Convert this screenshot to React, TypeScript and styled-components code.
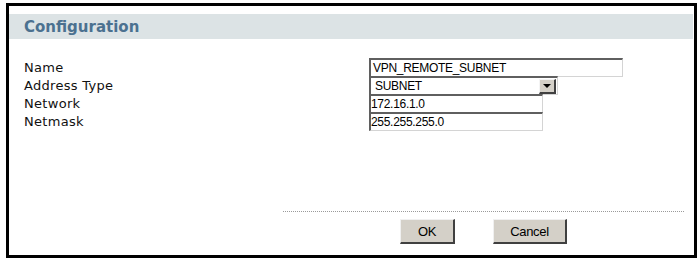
import React from "react";
import styled, { createGlobalStyle } from "styled-components";

const Global = createGlobalStyle`
  html, body { margin: 0; padding: 0; background: #fff; }
  body { font-family: "DejaVu Sans", Verdana, sans-serif; }
`;

const Panel = styled.div`
  box-sizing: border-box;
  margin: 3px 0 0 6px;
  width: 691px;
  height: 255px;
  border: 3px solid #000;
  padding-top: 8px;
  display: flex;
  flex-direction: column;
  background: #fff;
`;

const Header = styled.div`
  height: 25px;
  margin-right: 1px;
  background: #dce3e5;
  display: flex;
  align-items: center;
  padding-left: 15px;
  font-family: "DejaVu Sans", Verdana, sans-serif;
  font-weight: bold;
  font-size: 15px;
  color: #4b7190;
`;

const Form = styled.div`
  margin-top: 19px;
  padding-left: 15px;
  display: grid;
  grid-template-columns: 345px 1fr;
  grid-auto-rows: 18px;
`;

const Label = styled.div`
  display: flex;
  align-items: center;
  font-family: "DejaVu Sans", Verdana, sans-serif;
  font-size: 13px;
  letter-spacing: 0.3px;
  color: #111;
`;

const Field = styled.div<{ $w: number }>`
  box-sizing: border-box;
  width: ${(p) => p.$w}px;
  height: 19px;
  border-top: 2px solid #5f5f5f;
  border-left: 2px solid #5f5f5f;
  border-right: 1px solid #d4d4d4;
  border-bottom: 1px solid #d4d4d4;
  background: #fff;
  display: flex;
  align-items: center;
  padding-left: ${(p) => (p.$w > 200 ? 2 : 0)}px;
  font-family: "Liberation Sans", Arial, sans-serif;
  font-size: 12px;
  letter-spacing: -0.3px;
  color: #000;
`;

const SelectBox = styled(Field)`
  justify-content: space-between;
  padding-left: 4px;
  padding-right: 1px;
`;

const ArrowBtn = styled.div`
  box-sizing: border-box;
  width: 17px;
  height: 15px;
  background: #d4d0c8;
  border-top: 1px solid #f4f4f4;
  border-left: 1px solid #f4f4f4;
  border-right: 2px solid #404040;
  border-bottom: 2px solid #404040;
  display: flex;
  align-items: center;
  justify-content: center;
`;

const Footer = styled.div`
  margin-top: auto;
  margin-left: 274px;
  margin-right: 10px;
  border-top: 1px dotted #9a9a9a;
  padding-top: 7px;
  padding-bottom: 11px;
  display: flex;
  justify-content: center;
  gap: 38px;
`;

const Button = styled.button<{ $w: number }>`
  box-sizing: border-box;
  width: ${(p) => p.$w}px;
  height: 25px;
  margin: 0;
  padding: 0;
  background: #d4d0c8;
  border-top: 1px solid #f0f0f0;
  border-left: 1px solid #f0f0f0;
  border-right: 2px solid #404040;
  border-bottom: 2px solid #404040;
  font-family: "Liberation Sans", Arial, sans-serif;
  font-size: 13px;
  letter-spacing: -0.3px;
  color: #000;
`;

export default function App() {
  return (
    <>
      <Global />
      <Panel>
        <Header>Configuration</Header>
        <Form>
          <Label>Name</Label>
          <Field $w={254}>VPN_REMOTE_SUBNET</Field>
          <Label>Address Type</Label>
          <SelectBox $w={189}>
            <span>SUBNET</span>
            <ArrowBtn>
              <svg width="8" height="4" viewBox="0 0 8 4">
                <polygon points="0,0 8,0 4,4" fill="#000" />
              </svg>
            </ArrowBtn>
          </SelectBox>
          <Label>Network</Label>
          <Field $w={174}>172.16.1.0</Field>
          <Label>Netmask</Label>
          <Field $w={174}>255.255.255.0</Field>
        </Form>
        <Footer>
          <Button $w={55}>OK</Button>
          <Button $w={74}>Cancel</Button>
        </Footer>
      </Panel>
    </>
  );
}
